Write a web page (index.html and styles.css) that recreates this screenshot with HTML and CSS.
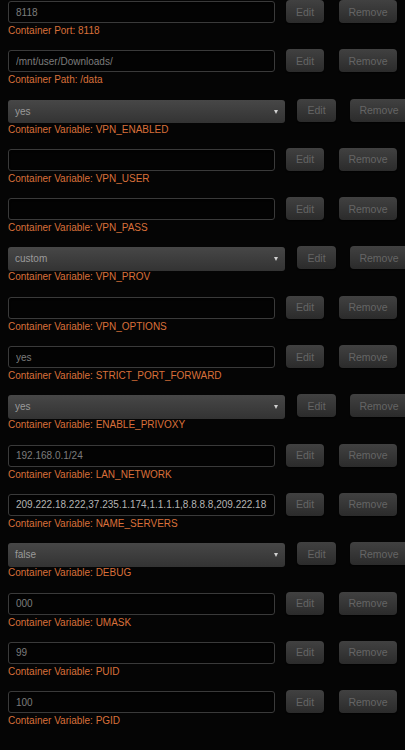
FILE: index.html
```html
<!DOCTYPE html>
<html lang="en">
<head>
  <meta charset="UTF-8" />
  <meta name="viewport" content="width=device-width, initial-scale=1.0" />
  <title>Container Settings</title>
  <link rel="stylesheet" href="styles.css">
</head>
<body>
  <div class="config">
    <div class="line">
      <input class="value" type="text" value="8118" />
      <button class="edit">Edit</button>
      <button class="remove">Remove</button>
    </div>
    <div class="desc">Container Port: 8118</div>
  </div>

  <div class="config">
    <div class="line">
      <input class="value" type="text" value="/mnt/user/Downloads/" />
      <button class="edit">Edit</button>
      <button class="remove">Remove</button>
    </div>
    <div class="desc">Container Path: /data</div>
  </div>

  <div class="config">
    <div class="line">
      <div class="choice">yes</div>
      <button class="edit">Edit</button>
      <button class="remove">Remove</button>
    </div>
    <div class="desc">Container Variable: VPN_ENABLED</div>
  </div>

  <div class="config">
    <div class="line">
      <input class="value" type="text" value="" />
      <button class="edit">Edit</button>
      <button class="remove">Remove</button>
    </div>
    <div class="desc">Container Variable: VPN_USER</div>
  </div>

  <div class="config">
    <div class="line">
      <input class="value" type="text" value="" />
      <button class="edit">Edit</button>
      <button class="remove">Remove</button>
    </div>
    <div class="desc">Container Variable: VPN_PASS</div>
  </div>

  <div class="config">
    <div class="line">
      <div class="choice">custom</div>
      <button class="edit">Edit</button>
      <button class="remove">Remove</button>
    </div>
    <div class="desc">Container Variable: VPN_PROV</div>
  </div>

  <div class="config">
    <div class="line">
      <input class="value" type="text" value="" />
      <button class="edit">Edit</button>
      <button class="remove">Remove</button>
    </div>
    <div class="desc">Container Variable: VPN_OPTIONS</div>
  </div>

  <div class="config">
    <div class="line">
      <input class="value" type="text" value="yes" />
      <button class="edit">Edit</button>
      <button class="remove">Remove</button>
    </div>
    <div class="desc">Container Variable: STRICT_PORT_FORWARD</div>
  </div>

  <div class="config">
    <div class="line">
      <div class="choice">yes</div>
      <button class="edit">Edit</button>
      <button class="remove">Remove</button>
    </div>
    <div class="desc">Container Variable: ENABLE_PRIVOXY</div>
  </div>

  <div class="config">
    <div class="line">
      <input class="value" type="text" value="192.168.0.1/24" />
      <button class="edit">Edit</button>
      <button class="remove">Remove</button>
    </div>
    <div class="desc">Container Variable: LAN_NETWORK</div>
  </div>

  <div class="config">
    <div class="line">
      <input class="value bright" type="text" value="209.222.18.222,37.235.1.174,1.1.1.1,8.8.8.8,209.222.18.218" />
      <button class="edit">Edit</button>
      <button class="remove">Remove</button>
    </div>
    <div class="desc">Container Variable: NAME_SERVERS</div>
  </div>

  <div class="config">
    <div class="line">
      <div class="choice">false</div>
      <button class="edit">Edit</button>
      <button class="remove">Remove</button>
    </div>
    <div class="desc">Container Variable: DEBUG</div>
  </div>

  <div class="config">
    <div class="line">
      <input class="value" type="text" value="000" />
      <button class="edit">Edit</button>
      <button class="remove">Remove</button>
    </div>
    <div class="desc">Container Variable: UMASK</div>
  </div>

  <div class="config">
    <div class="line">
      <input class="value" type="text" value="99" />
      <button class="edit">Edit</button>
      <button class="remove">Remove</button>
    </div>
    <div class="desc">Container Variable: PUID</div>
  </div>

  <div class="config">
    <div class="line">
      <input class="value" type="text" value="100" />
      <button class="edit">Edit</button>
      <button class="remove">Remove</button>
    </div>
    <div class="desc">Container Variable: PGID</div>
  </div>
</body>
</html>
```

FILE: styles.css
```css
html, body {
  overflow: hidden;
}
body {
  margin: 0;
  padding: 1px 0 0 8px;
  background: #050505;
  font-family: "Liberation Sans", Arial, sans-serif;
}
.config {
  height: 49.3px;
}
.line {
  display: flex;
  align-items: flex-start;
  height: 24px;
}
.value {
  flex: none;
  box-sizing: border-box;
  width: 267px;
  height: 22px;
  margin: 0;
  padding: 0 7px;
  border: 1px solid #3a3a3a;
  border-radius: 3px;
  background: #030303;
  box-shadow: inset 0 1px 2px rgba(0,0,0,0.8);
  color: #7c7c7c;
  font-family: inherit;
  font-size: 10px;
  outline: none;
}
.value.bright {
  color: #b4b4b4;
}
.choice {
  flex: none;
  position: relative;
  box-sizing: border-box;
  width: 277px;
  height: 23.5px;
  padding: 0 7px;
  border-radius: 3px;
  background: linear-gradient(#474747, #333);
  color: #9a9a9a;
  font-size: 10px;
  line-height: 23.5px;
}
/* small dropdown arrow */
.choice::after {
  content: "";
  position: absolute;
  right: 7px;
  top: 10px;
  border-left: 2.5px solid transparent;
  border-right: 2.5px solid transparent;
  border-top: 4px solid #d0d0d0;
}
button {
  flex: none;
  box-sizing: border-box;
  height: 23px;
  margin: 0;
  padding: 0;
  border: none;
  border-radius: 4px;
  background: linear-gradient(#414141, #2b2b2b);
  box-shadow: 0 1px 1px rgba(0,0,0,0.6);
  color: #656565;
  font-family: inherit;
  font-size: 10.5px;
}
.edit {
  width: 38px;
  margin-left: 11px;
  margin-top: -1px;
}
.remove {
  width: 58px;
  margin-left: 15px;
  margin-top: -1px;
}
.choice + .edit {
  margin-left: 12px;
  width: 39px;
}
.choice ~ .remove {
  margin-left: 14px;
}
.desc {
  color: #d9703a;
  font-size: 10px;
  line-height: 12px;
}
```
